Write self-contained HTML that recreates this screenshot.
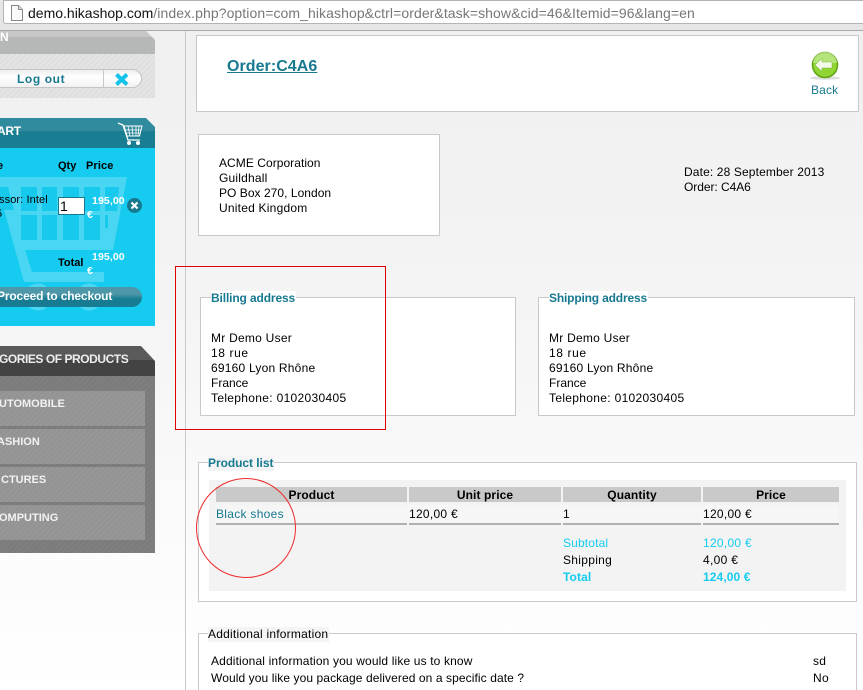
<!DOCTYPE html>
<html><head><meta charset="utf-8"><style>
html,body{margin:0;padding:0;width:863px;height:690px;overflow:hidden}
body{position:relative;font-family:"Liberation Sans",sans-serif;font-size:12px;color:#000;letter-spacing:.3px}
#p{position:absolute;left:0;top:0;width:863px;height:690px;overflow:hidden;background:linear-gradient(#f0efef,#f4f4f4 300px,#fbfafa 500px,#fff 690px)}
.a{position:absolute;white-space:nowrap;line-height:15px;margin-top:2px}
.b{position:absolute;box-sizing:border-box;border:1px solid #c9c9c9;background:#fff}
.t{color:#17798f;font-weight:bold;letter-spacing:-.13px}
.h{position:absolute;top:487px;height:15px;background:#c9c9c9;font-weight:bold;text-align:center;line-height:15px;letter-spacing:.1px}
.u{position:absolute;top:523px;height:2px;background:#b0b0b0}
.w{color:#fff;font-weight:bold}
.c{color:#15cbef}
.m{position:absolute;left:0;width:145px;height:35px;background:repeating-linear-gradient(135deg,#979797 0 2px,#939393 2px 4px)}
.mt{position:absolute;color:#f2f2f2;font-weight:bold;line-height:15px;letter-spacing:0;white-space:nowrap;margin-top:2px}
.i{font-size:11px}
</style></head><body><div id="p">
<!-- browser bar -->
<div style="position:absolute;left:0;top:0;width:863px;height:30px;background:#e6e6e6;border-bottom:1px solid #a9a9a9"></div>
<div style="position:absolute;left:3px;top:0;width:860px;height:24px;box-sizing:border-box;background:#fff;border:1px solid #b4b4b4;border-right:0;border-radius:0 0 0 3px"></div>
<svg style="position:absolute;left:10px;top:5px" width="14" height="16"><path d="M1.500 .5H8.500L12.500 4.500V15.500H1.500Z" fill="#fafafa" stroke="#888"/><path d="M8.500 .5V4.500H12.500" fill="#ddd" stroke="#888"/></svg>
<div class="a" style="left:28px;top:3px;font-size:14px;letter-spacing:.08px;line-height:17px;color:#777"><span style="color:#111;letter-spacing:0">demo.hikashop.com</span>/index.php?option=com_hikashop&amp;ctrl=order&amp;task=show&amp;cid=46&amp;Itemid=96&amp;lang=en</div>

<!-- content frame line -->
<div style="position:absolute;left:185px;top:31px;width:1px;height:659px;background:#c9c9c9"></div>

<!-- login module -->
<div style="position:absolute;left:0;top:31px;width:155px;height:23px;background:linear-gradient(#c6c7c6 0 6px,#b6b8b7 6px);clip-path:polygon(0 0,146px 0,155px 9px,155px 100%,0 100%)"></div>
<div class="mt" style="left:0;top:28px;color:#fff">N</div>
<div style="position:absolute;left:0;top:54px;width:155px;height:44px;background:repeating-linear-gradient(135deg,#e4e4e4 0 2px,#dedede 2px 4px)"></div>
<div style="position:absolute;left:-20px;top:69px;width:162px;height:19px;box-sizing:border-box;background:linear-gradient(#eee,#fff 40%,#f2f2f2);border:1px solid #c4c4c4;border-radius:10px"></div>
<div style="position:absolute;left:103px;top:70px;width:1px;height:17px;background:#c9c9c9"></div>
<div class="a" style="left:17px;top:70px;color:#17798f;font-weight:bold;letter-spacing:.6px">Log out</div>
<svg style="position:absolute;left:114px;top:72px" width="16" height="15"><path d="M2.500 2.500L13 12.500M13 2.500L2.500 12.500" stroke="#15c3ea" stroke-width="4"/></svg>

<!-- cart module -->
<div style="position:absolute;left:0;top:118px;width:155px;height:30px;background:linear-gradient(#308b9f 0 13px,#1a7e93 13px);clip-path:polygon(0 0,146px 0,155px 9px,155px 100%,0 100%)"></div>
<div class="mt" style="left:-3px;top:122px;color:#fff;letter-spacing:-.3px">ART</div>
<svg style="position:absolute;left:117px;top:121px" width="27" height="25" fill="none" stroke="#fff"><path d="M1 2L6 4L11 19H23" stroke-width="1.300"/><path d="M7 5H25L22.500 15H10Z" stroke-width="1"/><path d="M11 5L13 15M15 5L16 15M19 5V15M22 5L21 15M8 9H24M9 12H23" stroke-width=".8"/><circle cx="12" cy="22" r="1.500" fill="#fff"/><circle cx="21" cy="22" r="1.500" fill="#fff"/></svg>
<div style="position:absolute;left:0;top:148px;width:155px;height:178px;background:#15cbef;overflow:hidden">
<svg style="position:absolute;left:0;top:0" width="155" height="178" viewBox="0 148 155 178"><path fill="#49d6f3" fill-rule="evenodd" d="M0 177H127L113 250H25L32 272H104V282H24L0 195Z"/><circle cx="38" cy="297" r="13.500" fill="#49d6f3"/><circle cx="89" cy="297" r="13.500" fill="#49d6f3"/><g fill="#18c9ee"><path d="M0 187H8L14 210H0Z"/><rect x="21" y="187" width="16" height="24"/><rect x="42" y="187" width="15" height="24"/><rect x="63" y="187" width="16" height="24"/><rect x="84" y="187" width="16" height="24"/><path d="M105 187H119L117 211H105Z"/><rect x="21" y="215" width="16" height="25"/><rect x="42" y="215" width="15" height="25"/><rect x="63" y="215" width="16" height="25"/><rect x="84" y="215" width="16" height="25"/><path d="M105 215H108V228H105Z"/></g></svg>
</div>
<div class="a i" style="left:-3px;top:157px;font-weight:bold;letter-spacing:0">e</div>
<div class="a i" style="left:58px;top:157px;font-weight:bold;letter-spacing:0">Qty</div>
<div class="a i" style="left:86px;top:157px;font-weight:bold;letter-spacing:.1px">Price</div>
<div class="a i" style="left:-1px;top:191px;letter-spacing:.1px">ssor: Intel</div>
<div class="a i" style="left:-4px;top:205px;letter-spacing:.1px">5</div>
<div style="position:absolute;left:58px;top:197px;width:27px;height:18px;box-sizing:border-box;background:#fff;border:1px solid #17798f;line-height:16px;font-size:14px;padding-left:1px;letter-spacing:0">1</div>
<div class="a w" style="left:92px;top:192px;letter-spacing:.1px;font-size:10.500px">195,00</div>
<div class="a w" style="left:87px;top:206px;letter-spacing:0;font-size:10.500px">€</div>
<div style="position:absolute;left:127px;top:198px;width:15px;height:15px;border-radius:50%;background:#17798f"></div>
<svg style="position:absolute;left:127px;top:198px" width="15" height="15"><path d="M4.500 4.500L10.500 10.500M10.500 4.500L4.500 10.500" stroke="#fff" stroke-width="2.200"/></svg>
<div class="a i" style="left:58px;top:254px;font-weight:bold;letter-spacing:0">Total</div>
<div class="a w" style="left:92px;top:248px;letter-spacing:.1px;font-size:10.500px">195,00</div>
<div class="a w" style="left:87px;top:262px;letter-spacing:0;font-size:10.500px">€</div>
<div style="position:absolute;left:-20px;top:287px;width:162px;height:20px;border-radius:10px;background:linear-gradient(#4d97a9 0 7px,#177c92 12px);overflow:hidden"></div>
<div class="a" style="left:-3px;top:287px;color:#fff;font-weight:bold;letter-spacing:-.15px">Proceed to checkout</div>

<!-- categories -->
<div style="position:absolute;left:0;top:346px;width:155px;height:30px;background:linear-gradient(#5a5a5a 0 14px,#434343 14px);clip-path:polygon(0 0,141px 0,155px 15px,155px 100%,0 100%)"></div>
<div class="mt" style="left:-1px;top:350px;color:#eee;letter-spacing:-.45px">GORIES OF PRODUCTS</div>
<div style="position:absolute;left:0;top:376px;width:155px;height:177px;background:repeating-linear-gradient(135deg,#7f7f7f 0 2px,#7b7b7b 2px 4px)"></div>
<div class="m" style="top:391px"></div>
<div class="m" style="top:429px"></div>
<div class="m" style="top:467px"></div>
<div class="m" style="top:505px"></div>
<div class="mt i" style="left:-1px;top:395px">UTOMOBILE</div>
<div class="mt i" style="left:-3px;top:433px">ASHION</div>
<div class="mt i" style="left:1px;top:471px">CTURES</div>
<div class="mt i" style="left:-1px;top:509px">OMPUTING</div>

<!-- order header -->
<div class="b" style="left:196px;top:35px;width:663px;height:77px"></div>
<div class="a" style="left:227px;top:55px;font-size:16px;line-height:19px;font-weight:bold;color:#17798f;text-decoration:underline;letter-spacing:.05px">Order:C4A6</div>
<svg style="position:absolute;left:807px;top:50px" width="36" height="32"><ellipse cx="18" cy="28" rx="15" ry="1.800" fill="#ddd"/><circle cx="18" cy="15" r="12.500" fill="#8fd534" stroke="#5fa312" stroke-width="1.500"/><path d="M6 13A12 11 0 0 1 30 13Z" fill="#c4e99a" opacity=".7"/><path d="M8 15L15 8.500V12H25V18H15V21.500Z" fill="#f4fae9" stroke="#7cb33a" stroke-width=".5"/></svg>
<div class="a" style="left:811px;top:81px;color:#17798f;letter-spacing:.15px">Back</div>

<!-- sender -->
<div class="b" style="left:198px;top:134px;width:242px;height:102px"></div>
<div class="a" style="left:219px;top:154px"><span style="letter-spacing:.05px">ACME Corporation</span><br><span style="letter-spacing:.2px">Guildhall</span><br><span style="letter-spacing:.04px">PO Box 270, London</span><br><span style="letter-spacing:.22px">United Kingdom</span></div>
<div class="a" style="left:684px;top:163px"><span style="letter-spacing:.13px">Date: 28 September 2013</span><br><span style="letter-spacing:-.05px">Order: C4A6</span></div>

<!-- addresses -->
<div class="b" style="left:200px;top:297px;width:316px;height:119px"></div>
<div class="a t" style="left:211px;top:289px;background:#fff;padding-right:1px">Billing address</div>
<div class="a" style="left:211px;top:329px"><span style="letter-spacing:.25px">Mr Demo User</span><br><span style="letter-spacing:.6px">18 rue</span><br><span style="letter-spacing:.21px">69160 Lyon Rhône</span><br><span style="letter-spacing:0">France</span><br><span style="letter-spacing:.32px">Telephone: 0102030405</span></div>
<div class="b" style="left:538px;top:297px;width:317px;height:119px"></div>
<div class="a t" style="left:549px;top:289px;background:#fff;padding-right:1px;letter-spacing:-.17px">Shipping address</div>
<div class="a" style="left:549px;top:329px"><span style="letter-spacing:.25px">Mr Demo User</span><br><span style="letter-spacing:.6px">18 rue</span><br><span style="letter-spacing:.21px">69160 Lyon Rhône</span><br><span style="letter-spacing:0">France</span><br><span style="letter-spacing:.32px">Telephone: 0102030405</span></div>

<!-- product list -->
<div class="b" style="left:198px;top:462px;width:659px;height:140px"></div>
<div class="a t" style="left:208px;top:454px;background:#f4f4f4;padding-right:1px;letter-spacing:-.05px">Product list</div>
<div style="position:absolute;left:209px;top:480px;width:637px;height:111px;background:#f3f3f3"></div>
<div class="h" style="left:216px;width:191px;line-height:17px">Product</div>
<div class="h" style="left:409px;width:152px;line-height:17px">Unit price</div>
<div class="h" style="left:563px;width:138px;line-height:17px">Quantity</div>
<div class="h" style="left:703px;width:136px;line-height:17px">Price</div>
<div style="position:absolute;left:216px;top:505px;width:623px;height:18px;background:#f6f6f6"></div>
<div class="a" style="left:216px;top:505px;color:#17798f;letter-spacing:.29px">Black shoes</div>
<div class="a" style="left:409px;top:505px;letter-spacing:.28px">120,00 €</div>
<div class="a" style="left:563px;top:505px">1</div>
<div class="a" style="left:703px;top:505px;letter-spacing:.28px">120,00 €</div>
<div class="u" style="left:216px;width:191px"></div>
<div class="u" style="left:409px;width:152px"></div>
<div class="u" style="left:563px;width:138px"></div>
<div class="u" style="left:703px;width:136px"></div>
<div class="a c" style="left:563px;top:534px;letter-spacing:.15px">Subtotal</div>
<div class="a c" style="left:703px;top:534px;letter-spacing:.28px">120,00 €</div>
<div class="a" style="left:563px;top:551px">Shipping</div>
<div class="a" style="left:703px;top:551px">4,00 €</div>
<div class="a c" style="left:563px;top:568px;font-weight:bold;letter-spacing:.1px">Total</div>
<div class="a c" style="left:703px;top:568px;font-weight:bold;letter-spacing:.1px">124,00 €</div>

<!-- additional -->
<div class="b" style="left:198px;top:633px;width:659px;height:70px"></div>
<div class="a" style="left:208px;top:625px;background:#f4f4f4;padding-right:1px;letter-spacing:.22px">Additional information</div>
<div class="a" style="left:211px;top:652px;letter-spacing:.14px">Additional information you would like us to know</div>
<div class="a" style="left:211px;top:669px;letter-spacing:.09px">Would you like you package delivered on a specific date ?</div>
<div class="a" style="left:813px;top:652px">sd</div>
<div class="a" style="left:813px;top:669px">No</div>

<!-- annotations -->
<div style="position:absolute;left:175px;top:266px;width:211px;height:164px;box-sizing:border-box;border:1px solid #e00000"></div>
<div style="position:absolute;left:196px;top:478px;width:100px;height:100px;box-sizing:border-box;border:1px solid #ee2a2a;border-radius:50%"></div>
</div></body></html>
